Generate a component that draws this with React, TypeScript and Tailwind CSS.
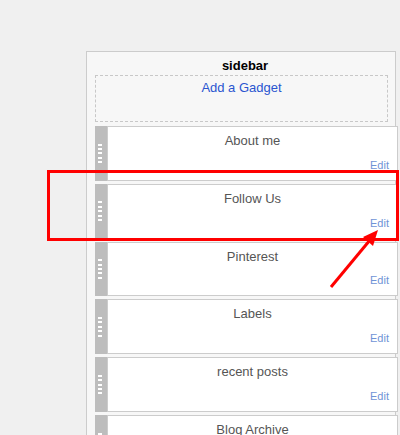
import React from "react";

const widgets = ["About me", "Follow Us", "Pinterest", "Labels", "recent posts", "Blog Archive"];

function Handle() {
  return (
    <div className="w-[12px] shrink-0 bg-[#bdbdbd] flex flex-col items-start justify-center gap-[2.4px] pl-[3px]">
      {[0, 1, 2, 3, 4].map((i) => (
        <div key={i} className="w-[4px] h-[2px] bg-white" />
      ))}
    </div>
  );
}

function Widget({ title }: { title: string }) {
  return (
    <div className="flex h-[54.8px] w-[303px]">
      <Handle />
      <div className="flex-1 flex flex-col border border-[#cccccc] bg-white">
        <div className="text-center text-[13px] leading-[15px] text-[#555555] pt-[6px]">{title}</div>
        <div className="flex-1" />
        <div className="text-right text-[11px] leading-[13px] text-[#6f93d6] pr-[8px] pb-[8px]">Edit</div>
      </div>
    </div>
  );
}

export default function App() {
  return (
    <div
      className="relative w-[400px] h-[435px] overflow-hidden bg-[#f0f0f0]"
      style={{ fontFamily: '"Liberation Sans", Arial, sans-serif' }}
    >
      <div className="h-[51px]" />
      <div className="ml-[86px] w-[310px] h-[400px] border border-[#cccccc] bg-[#f7f7f7] pl-[8px]">
        <div className="text-center font-bold text-[13px] leading-[15px] text-black pt-[6px] pb-[2px]">sidebar</div>
        <div className="w-[293px] h-[47px] border border-dashed border-[#c8c8c8] text-center text-[13px] leading-[15px] text-[#2a55d0] pt-[4px]">
          Add a Gadget
        </div>
        <div className="flex flex-col gap-[3px] mt-[4px]">
          {widgets.map((w) => (
            <Widget key={w} title={w} />
          ))}
        </div>
      </div>

      <div className="absolute left-[47px] top-[170px] w-[352px] h-[71px] border-[3px] border-[#ff0000] pointer-events-none" />

      <svg className="absolute left-0 top-0 pointer-events-none" width="400" height="435">
        <line x1="331" y1="287" x2="370" y2="240" stroke="#ff0000" strokeWidth="3" />
        <polygon points="378,230 373,246 363,237" fill="#ff0000" />
      </svg>
    </div>
  );
}
